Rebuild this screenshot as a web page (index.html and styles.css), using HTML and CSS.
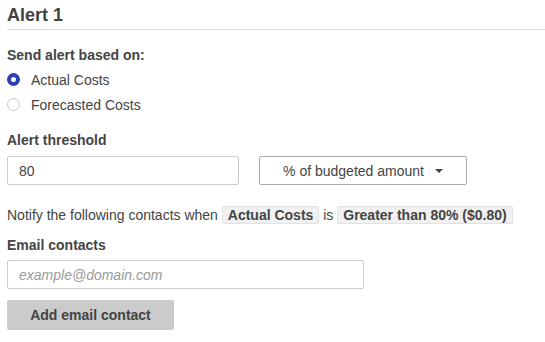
FILE: index.html
```html
<!DOCTYPE html>
<html>
<head>
<meta charset="utf-8">
<link rel="stylesheet" href="styles.css">
</head>
<body>
<section class="alert">
  <h2 class="title">Alert 1</h2>

  <div class="label first">Send alert based on:</div>
  <div class="radios">
    <label class="radio"><span class="dot on"></span>Actual Costs</label>
    <label class="radio"><span class="dot"></span>Forecasted Costs</label>
  </div>

  <div class="label">Alert threshold</div>
  <div class="threshold">
    <div class="input value">80</div>
    <div class="select">% of budgeted amount<span class="caret"></span></div>
  </div>

  <p class="notify">Notify the following contacts when <span class="tag">Actual Costs</span> is <span class="tag">Greater than 80% ($0.80)</span></p>

  <div class="label email-label">Email contacts</div>
  <div class="input email placeholder">example@domain.com</div>
  <button class="btn">Add email contact</button>
</section>
</body>
</html>
```

FILE: styles.css
```css
html, body {
  margin: 0;
  padding: 0;
  background: #fff;
}
body {
  font-family: "Liberation Sans", Arial, sans-serif;
  font-size: 14px;
  color: #444;
}
.alert {
  padding-left: 7px;
}
.title {
  margin: 5px 0 0;
  font-size: 18px;
  line-height: 20px;
  font-weight: bold;
  color: #444;
  padding-bottom: 4px;
  border-bottom: 1px solid #dedede;
}
.label {
  font-weight: bold;
  line-height: 20px;
  color: #444;
  margin-top: 15px;
}
.radios {
  margin-top: 5px;
  display: flex;
  flex-direction: column;
  gap: 5px;
}
.radio {
  display: flex;
  align-items: center;
  height: 20px;
  line-height: 20px;
}
.dot {
  box-sizing: border-box;
  width: 13px;
  height: 13px;
  border-radius: 50%;
  border: 1px solid #c8c8c8;
  background: #fff;
  margin-right: 11px;
  margin-top: -2px;
}
.dot.on {
  border: 4px solid #2f3eb0;
}
.threshold {
  margin-top: 6px;
  display: flex;
  gap: 20px;
}
.input {
  box-sizing: border-box;
  height: 29px;
  border: 1px solid #ccc;
  border-radius: 2px;
  padding-left: 11px;
  display: flex;
  align-items: center;
  background: #fff;
}
.value {
  width: 232px;
  color: #444;
}
.select {
  box-sizing: border-box;
  width: 208px;
  height: 29px;
  border: 1px solid #aaa;
  border-radius: 2px;
  display: flex;
  align-items: center;
  justify-content: center;
  color: #444;
}
.caret {
  width: 0;
  height: 0;
  border-left: 4px solid transparent;
  border-right: 4px solid transparent;
  border-top: 4px solid #444;
  margin-left: 11px;
  margin-top: 1px;
}
.notify {
  margin: 20px 0 0;
  line-height: 20px;
}
.tag {
  background: #f1f1f1;
  border: 1px solid #e2e2e2;
  border-radius: 2px;
  padding: 0 5px;
  font-weight: bold;
  color: #444;
}
.email-label {
  margin-top: 10px;
}
.email {
  margin-top: 5px;
  width: 357px;
}
.placeholder {
  color: #999;
  font-style: italic;
}
.btn {
  display: block;
  margin-top: 11px;
  width: 167px;
  height: 30px;
  border: none;
  border-radius: 2px;
  background: #cbcbcb;
  font-family: "Liberation Sans", Arial, sans-serif;
  font-size: 14px;
  font-weight: bold;
  color: #444;
  padding: 0;
}
```
